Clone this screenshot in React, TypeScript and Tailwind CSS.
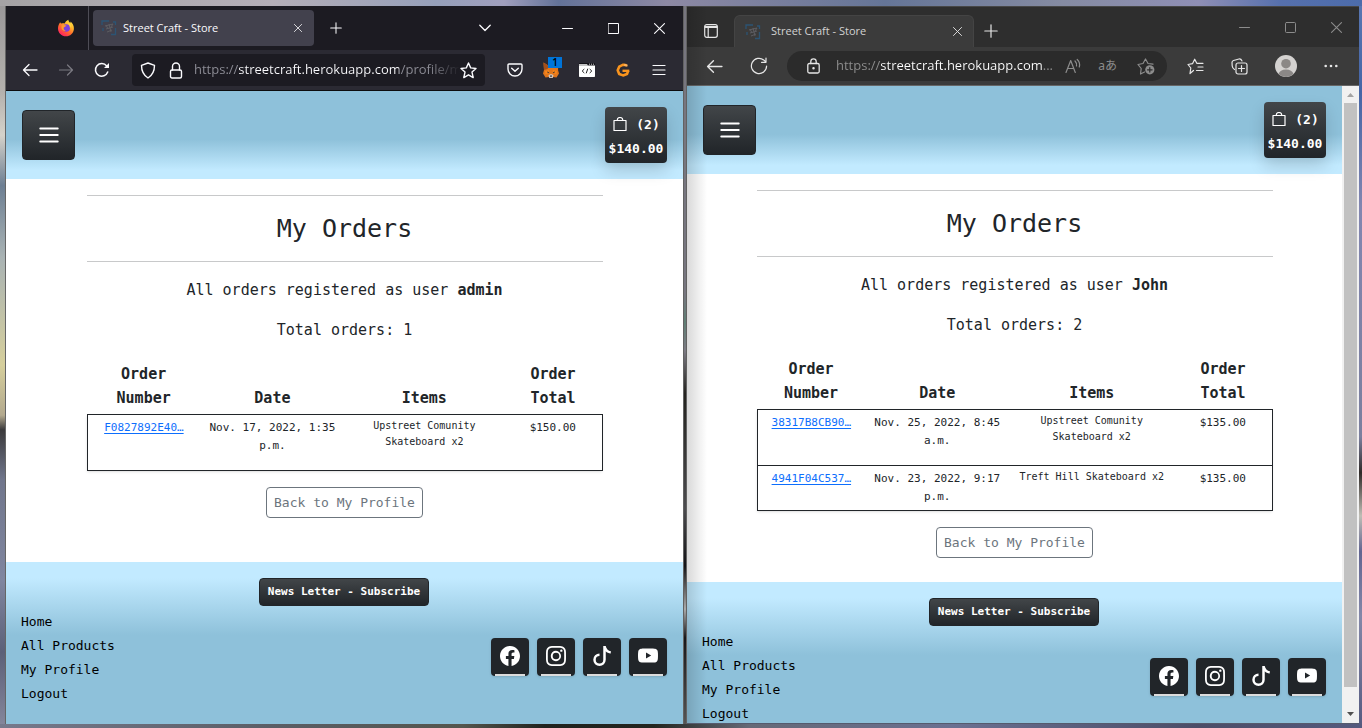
import React from "react";
import { BsFacebook, BsInstagram, BsTiktok, BsYoutube } from "react-icons/bs";

type Order = { number: string; date: string; items: string; total: string };

type StoreProps = {
  user: string;
  orders: Order[];
  columns: string[];
};

const line = {
  fill: "none",
  stroke: "currentColor",
  strokeLinecap: "round" as const,
  strokeLinejoin: "round" as const,
};

function BackIcon({ size }: { size: number }) {
  return (
    <svg width={size} height={size} viewBox="0 0 16 16" {...line} strokeWidth="1.3">
      <path d="M15 8H1.5M7 2.5L1.5 8L7 13.5" />
    </svg>
  );
}

function ForwardIcon() {
  return (
    <svg width="16" height="16" viewBox="0 0 16 16" {...line} strokeWidth="1.2">
      <path d="M1.500 8H14.500M9.500 3L14.500 8L9.500 13" />
    </svg>
  );
}

function CrossIcon({ size }: { size: number }) {
  return (
    <svg width={size} height={size} viewBox="0 0 10 10" {...line} strokeWidth="1">
      <path d="M.5.5L9.500 9.500M9.500.5L.5 9.500" />
    </svg>
  );
}

function PlusIcon({ size }: { size: number }) {
  return (
    <svg width={size} height={size} viewBox="0 0 14 14" {...line} strokeWidth="1.2">
      <path d="M7 .8V13.200M.8 7H13.200" />
    </svg>
  );
}

function MinimizeIcon() {
  return (
    <svg width="11" height="11" viewBox="0 0 11 11" {...line} strokeWidth="1">
      <path d="M.5 5.500H10.500" />
    </svg>
  );
}

function MaximizeIcon({ radius }: { radius: number }) {
  return (
    <svg width="11" height="11" viewBox="0 0 11 11" {...line} strokeWidth="1">
      <rect x=".5" y=".5" width="10" height="10" rx={radius} />
    </svg>
  );
}

function StoreIcon() {
  return (
    <svg width="16" height="16" viewBox="0 0 16 16" fill="none" className="shrink-0">
      <path d="M1 5V1H5M5 1H8M14.500 8V14.500H10M14.500 5V2H12M2 8V11" stroke="#2c5474" strokeWidth="1.300" />
      <path
        d="M4 6L12 4M5 9L12 7M6 12L11 10M8 4L10 12M5 5L7 9M12 4L10 7"
        stroke="#5d5d62"
        strokeWidth="1"
      />
    </svg>
  );
}

function FirefoxIcon() {
  return (
    <svg width="18" height="18" viewBox="0 0 18 18">
      <defs>
        <linearGradient id="flame" x1="1" y1="0" x2="0.3" y2="1">
          <stop offset="0" stopColor="#fff44f" />
          <stop offset="0.35" stopColor="#ffbd2e" />
          <stop offset="0.65" stopColor="#ff6a2a" />
          <stop offset="1" stopColor="#ff1f63" />
        </linearGradient>
      </defs>
      <path
        d="M3.200 3.200C3.400 4 3.900 4.400 4.500 4.600C5.600 4 6.800 4 7.700 4.500C8.400 2.800 9.500 1.500 11.400.8C11.300 2.300 12.400 3.100 13.200 4C13.600 3.600 13.600 3.100 13.500 2.600C15.700 4.400 17.100 7 16.900 10C16.600 14.400 13.100 17.300 9 17.300C4.600 17.300 1 14 1 9.500C1 7.200 1.700 4.900 3.200 3.200Z"
        fill="url(#flame)"
      />
      <circle cx="9.300" cy="9" r="3.700" fill="#7a3fe0" />
      <path d="M4.500 6.500C6.500 5.500 8.500 5.800 9.700 7C8.200 7.100 7.500 8.100 6.700 8.700C6.500 10 7.200 11.300 8.700 11.700C7 12.500 4.800 11 4.500 9Z" fill="#ff9b2f" />
      <path d="M9.500 2.800C11.500 4 13 6 12.900 9C13.900 8 14 6.500 13.700 5.500" fill="#ffd840" />
    </svg>
  );
}

function FoxIcon() {
  return (
    <svg width="18" height="18" viewBox="0 0 18 18">
      <path d="M1.500 1.500L7 5H11L16.500 1.500L16 9L17 12.500L14.500 16.500L10.800 16H7.200L3.500 16.500L1 12.500L2 9Z" fill="#e2761b" />
      <path d="M1.500 1.500L7 5L5.500 8L2 9Z" fill="#a34f1c" />
      <path d="M3 10L7 9L7.500 12L3.500 13.500ZM15 10L11 9L10.500 12L14.500 13.500Z" fill="#f6851b" />
      <path d="M5 10.500L7.300 11.300L6 12.300ZM13 10.500L10.700 11.300L12 12.300Z" fill="#2b2f3a" />
      <path d="M6.500 14L9 13L11.500 14L10.800 17H7.200Z" fill="#d0c3b8" />
      <path d="M8 14.500H10L9.500 16H8.500Z" fill="#2b2f3a" />
    </svg>
  );
}

function CodeIcon() {
  return (
    <svg width="16" height="14" viewBox="0 0 16 14">
      <rect width="16" height="14" rx=".8" fill="#fff" />
      <path d="M0 0H16V2.500H0Z" fill="#15141a" />
      <path d="M0 1.300H8L9 2.500H0Z" fill="#fff" />
      <path d="M10 1.200H11M12 1.200H13M14 1.200H15" stroke="#fff" strokeWidth=".8" />
      <path d="M5.300 6L3.200 8L5.300 10M10.700 6L12.800 8L10.700 10M8.800 5.700L7.200 10.300" fill="none" stroke="#222" strokeWidth="1" />
    </svg>
  );
}

function GIcon() {
  return (
    <svg width="14" height="14" viewBox="0 0 14 14" fill="none">
      <path d="M10.600 2.300L7.300 1.700L3.200 3.700L1.700 7.300L3.200 11L7 12.400L11 11L12.200 7.900" stroke="#f9941e" strokeWidth="2.600" strokeLinejoin="round" />
      <path d="M6.500 7.800H13.300" stroke="#f9941e" strokeWidth="2.400" />
      <path d="M8.200 1.700L11.500 2.800" stroke="#ffb35c" strokeWidth="2" />
    </svg>
  );
}

function BagIcon() {
  return (
    <svg width="16" height="16" viewBox="0 0 16 16" {...line} strokeWidth="1.200">
      <path d="M2 3.500H14V13.500H2ZM5.300 3.500V2.700A2.700 2.200 0 0 1 10.700 2.700V3.500" />
    </svg>
  );
}

function MenuButton() {
  return (
    <button
      aria-label="Menu"
      className="flex h-[50px] w-[53px] items-center justify-center rounded border border-[#212529] bg-linear-to-b from-[#424649] to-[#212529] text-white"
    >
      <svg width="20" height="16" viewBox="0 0 20 16" fill="none" stroke="currentColor" strokeWidth="1.800" strokeLinecap="round">
        <path d="M1.200 1.500H18.800M1.200 8H18.800M1.200 14.500H18.800" />
      </svg>
    </button>
  );
}

const socials = [
  { name: "Facebook", Icon: BsFacebook },
  { name: "Instagram", Icon: BsInstagram },
  { name: "TikTok", Icon: BsTiktok },
  { name: "YouTube", Icon: BsYoutube },
];

function StorePage({ user, orders, columns }: StoreProps) {
  return (
    <div className="flex min-h-full flex-col bg-white font-['DejaVu_Sans_Mono',monospace] text-[15px] leading-6 text-[#212529]">
      <header className="flex h-[88px] shrink-0 items-center justify-between bg-[linear-gradient(#8ec1da_55%,#c2eaff_90%)] px-4">
        <MenuButton />
        <a
          href="#bag"
          className="flex h-14 w-[62px] flex-col items-center justify-center rounded bg-linear-to-b from-[#424649] to-[#212529] pt-1 text-[13px] font-bold text-white shadow-[0_8px_16px_rgba(0,0,0,0.15)]"
        >
          <span className="flex items-center gap-2">
            <BagIcon />
            (2)
          </span>
          <span>$140.00</span>
        </a>
      </header>

      <main className="mx-auto w-full max-w-[540px] grow px-3 pb-6 text-center">
        <hr className="mt-4 border-[#c8c9ca]" />
        <h1 className="my-4 text-[25px] leading-[33px]">My Orders</h1>
        <hr className="border-[#c8c9ca]" />
        <p className="mt-4">
          All orders registered as user <strong>{user}</strong>
        </p>
        <p className="my-4">Total orders: {orders.length}</p>
        <table className="w-full table-fixed border-collapse">
          <colgroup>
            {columns.map((width, i) => (
              <col key={i} className={width} />
            ))}
          </colgroup>
          <thead>
            <tr>
              <th className="px-6 py-1 align-bottom">Order Number</th>
              <th className="p-1 align-bottom">Date</th>
              <th className="p-1 align-bottom">Items</th>
              <th className="px-4 py-1 align-bottom">Order Total</th>
            </tr>
          </thead>
          <tbody className="shadow-sm">
            {orders.map((order) => (
              <tr key={order.number} className="border border-[#212529] align-top text-[11px] leading-[18px]">
                <td className="p-1">
                  <a href="#order" className="text-[#0d6efd] underline underline-offset-2">
                    {order.number}
                  </a>
                </td>
                <td className="p-1">{order.date}</td>
                <td className="px-1 py-[3px] text-[10px] leading-4">
                  <p className="mb-[17px]">{order.items}</p>
                </td>
                <td className="p-1">{order.total}</td>
              </tr>
            ))}
          </tbody>
        </table>
        <a
          href="#profile"
          className="mt-4 inline-block rounded border border-[#6c757d] px-[7px] py-1 text-[13px] leading-[21px] text-[#6c757d]"
        >
          Back to My Profile
        </a>
      </main>

      <footer className="shrink-0 bg-[linear-gradient(#c2eaff_10%,#8ec1da_45%)] pt-4 pr-4 pb-[18px] pl-[15px]">
        <div className="flex justify-center">
          <button className="rounded-sm border border-[#212529] bg-linear-to-b from-[#424649] to-[#212529] px-2 py-1 text-[11px] leading-[18px] font-bold text-white">
            News Letter - Subscribe
          </button>
        </div>
        <div className="mt-1 flex items-center justify-between">
          <ul className="text-[13px] text-black">
            {["Home", "All Products", "My Profile", "Logout"].map((label) => (
              <li key={label}>
                <a href="#page">{label}</a>
              </li>
            ))}
          </ul>
          <div className="flex gap-2 pb-0.5">
            {socials.map(({ name, Icon }) => (
              <a
                key={name}
                href="#social"
                aria-label={name}
                className="flex h-[38px] w-[38px] flex-col items-center justify-between rounded bg-[#212529] pt-2 text-xl text-white shadow-sm"
              >
                <Icon />
                <span className="h-0.5 w-[30px] bg-[#dcdcdc]" />
              </a>
            ))}
          </div>
        </div>
      </footer>
    </div>
  );
}

function FirefoxWindow() {
  return (
    <section className="flex min-h-0 min-w-0 flex-col overflow-hidden font-['Open_Sans',sans-serif] text-[#fbfbfe]">
      <div className="flex h-11 shrink-0 items-center bg-[#1c1b22]">
        <div className="flex w-[83px] items-center justify-end self-stretch border-r border-[#4e4d56] pr-[13px]">
          <FirefoxIcon />
        </div>
        <div className="ml-1 flex h-9 w-[221px] items-center rounded bg-[#42414d] px-2">
          <StoreIcon />
          <span className="ml-1.5 grow text-[11px]">Street Craft - Store</span>
          <button aria-label="Close tab" className="mr-1"><CrossIcon size={8} /></button>
        </div>
        <button aria-label="New tab" className="ml-4"><PlusIcon size={12} /></button>
        <div className="ml-auto flex items-center">
          <button aria-label="List all tabs" className="mr-[71px]">
            <svg width="12" height="8" viewBox="0 0 12 8" {...line} strokeWidth="1.300"><path d="M.8 1.200L6 6.500L11.200 1.200" /></svg>
          </button>
          <button aria-label="Minimize" className="mr-[35px]"><MinimizeIcon /></button>
          <button aria-label="Maximize" className="mr-[35px]"><MaximizeIcon radius={0} /></button>
          <button aria-label="Close" className="mr-[18px]"><CrossIcon size={11} /></button>
        </div>
      </div>
      <div className="flex h-[41px] shrink-0 items-center border-b border-[#0c0c0d] bg-[#2b2a33] pl-4">
        <button aria-label="Back"><BackIcon size={16} /></button>
        <button aria-label="Forward" className="ml-5 text-[#7b7a82]"><ForwardIcon /></button>
        <button aria-label="Reload" className="ml-5">
          <svg width="16" height="16" viewBox="0 0 16 16" {...line} strokeWidth="1.500">
            <path d="M13.700 10A6.300 6.300 0 1 1 12.700 4" />
            <path d="M15 1V6H10Z" fill="currentColor" stroke="none" />
          </svg>
        </button>
        <div className="ml-[22px] flex h-8 min-w-0 grow items-center rounded bg-[#1c1b22] px-2">
          <svg width="16" height="17" viewBox="0 0 16 17" {...line} strokeWidth="1.400" className="shrink-0">
            <path d="M8 1L14.500 3.300C14.500 9 13 13 8 16C3 13 1.500 9 1.500 3.300Z" />
          </svg>
          <svg width="14" height="17" viewBox="0 0 14 17" {...line} strokeWidth="1.400" className="ml-[13px] shrink-0">
            <path d="M3.500 8V4.500A3.500 3.500 0 0 1 10.500 4.500V8" />
            <rect x="1.500" y="8" width="11" height="8" rx="1.500" />
          </svg>
          <input
            aria-label="Address"
            readOnly
            value="https://streetcraft.herokuapp.com/profile/my_orders"
            className="ml-[11px] min-w-0 grow bg-[linear-gradient(to_right,#8f8f98_45px,#fbfbfe_45px,#fbfbfe_205px,#8f8f98_205px,#8f8f98_88%,transparent)] bg-clip-text text-[13px] text-transparent outline-none"
          />
          <svg width="17" height="17" viewBox="0 0 17 17" {...line} strokeWidth="1.400" className="shrink-0">
            <path d="M8.500 1L10.700 5.900L16 6.500L12 10.100L13.200 15.600L8.500 12.800L3.800 15.600L5 10.100L1 6.500L6.300 5.900Z" />
          </svg>
        </div>
        <div className="mr-4 ml-[22px] flex items-center gap-5">
          <button aria-label="Pocket">
            <svg width="16" height="14" viewBox="0 0 16 14" {...line} strokeWidth="1.400">
              <path d="M2 1H14Q15 1 15 2V6A7 7 0 0 1 1 6V2Q1 1 2 1ZM4.700 5.200L8 8.300L11.300 5.200" />
            </svg>
          </button>
          <button aria-label="Wallet" className="relative -mx-px">
            <FoxIcon />
            <span className="absolute -top-1 left-1.5 h-[11px] w-[14px] bg-[#0074d9] text-center text-[10px] leading-[11px] font-semibold text-black">1</span>
          </button>
          <button aria-label="Source"><CodeIcon /></button>
          <button aria-label="Extension" className="flex w-4 justify-center"><GIcon /></button>
          <button aria-label="Application menu" className="flex w-4 justify-center">
            <svg width="14" height="12" viewBox="0 0 14 12" {...line} strokeWidth="1.200"><path d="M1 1.500H13M1 6H13M1 10.500H13" /></svg>
          </button>
        </div>
      </div>
      <div className="min-h-0 grow overflow-hidden">
        <StorePage
          user="admin"
          columns={["w-[22%]", "w-[28%]", "w-[31%]", "w-[19%]"]}
          orders={[
            { number: "F0827892E40…", date: "Nov. 17, 2022, 1:35 p.m.", items: "Upstreet Comunity Skateboard x2", total: "$150.00" },
          ]}
        />
      </div>
    </section>
  );
}

function EdgeWindow() {
  return (
    <section className="relative mb-px flex min-h-0 min-w-0 flex-col overflow-hidden border-t border-[#474747] font-['Open_Sans',sans-serif] text-[#e6e6e6]">
      <div className="flex h-10 shrink-0 items-center bg-[#2e2e2e] pl-[17px]">
        <button aria-label="Tab actions" className="mt-2">
          <svg width="14" height="14" viewBox="0 0 14 14" {...line} strokeWidth="1.200">
            <rect x=".7" y=".7" width="12.600" height="12.600" rx="2" />
            <path d="M1 2.500H13M1 3.500H13M4.200 4V13" />
          </svg>
        </button>
        <div className="ml-4 flex h-8 w-60 items-center self-end rounded-t-md border-x border-t border-[#444] bg-[#3b3b3b] px-2.5">
          <StoreIcon />
          <span className="ml-2.5 grow text-[11px] text-[#d2d2d2]">Street Craft - Store</span>
          <button aria-label="Close tab" className="mr-px"><CrossIcon size={9} /></button>
        </div>
        <button aria-label="New tab" className="mt-2 ml-2.5"><PlusIcon size={14} /></button>
        <div className="ml-auto flex items-center gap-[35px] pr-[17px] text-[#8c8c8c]">
          <button aria-label="Minimize"><MinimizeIcon /></button>
          <button aria-label="Maximize"><MaximizeIcon radius={1} /></button>
          <button aria-label="Close"><CrossIcon size={11} /></button>
        </div>
      </div>
      <div className="flex h-[39px] shrink-0 items-center border-b border-[#666] bg-[#3b3b3b] pl-[19px]">
        <button aria-label="Back"><BackIcon size={17} /></button>
        <button aria-label="Reload" className="ml-[27px]">
          <svg width="18" height="18" viewBox="0 0 18 18" {...line} strokeWidth="1.200">
            <path d="M16.600 9A7.600 7.600 0 1 1 14 3.200L16 5.200M16 1V5.300H11.500" />
          </svg>
        </button>
        <div className="ml-[19px] flex h-[30px] min-w-0 grow items-center rounded-full bg-[#2b2b2b] pr-3 pl-5">
          <svg width="13" height="16" viewBox="0 0 13 16" {...line} strokeWidth="1.300" className="shrink-0">
            <path d="M3.800 5.500V3.500A2.700 2.700 0 0 1 9.200 3.500V5.500" />
            <rect x=".8" y="5.500" width="11.400" height="9.500" rx="1.500" />
            <circle cx="6.500" cy="10.200" r=".6" fill="currentColor" />
          </svg>
          <input
            aria-label="Address"
            readOnly
            value="https://streetcraft.herokuapp.com..."
            className="ml-4 min-w-0 grow bg-[linear-gradient(to_right,#8f8f8f_45px,#ffffff_45px,#ffffff_206px,#8f8f8f_206px)] bg-clip-text text-[13px] text-transparent outline-none"
          />
          <div className="flex items-center gap-4 text-[#8c8c8c]">
            <button aria-label="Read aloud">
              <svg width="17" height="16" viewBox="0 0 17 16" {...line} strokeWidth="1.200">
                <path d="M1 14.500L5.700 2.500L10.300 14.500M2.700 10.500H8.700M10 3Q12 5 11.500 8M12.200 1.500Q15.500 4.500 14.300 9" />
              </svg>
            </button>
            <button className="font-['Noto_Sans','Noto_Sans_CJK_JP',sans-serif] text-xs leading-4">
              aあ
            </button>
            <button aria-label="Add to favorites" className="ml-1">
              <svg width="18" height="18" viewBox="0 0 18 18" {...line} strokeWidth="1.200">
                <path d="M7.500 15L3.500 17L4.200 11.500L1 7.500L6 6.500L8.500 2L11 6.500L16 7.200" />
                <circle cx="12.800" cy="12.800" r="4.600" fill="currentColor" stroke="none" />
                <path d="M10.500 12.800H15.100M12.800 10.500V15.100" stroke="#2b2b2b" />
              </svg>
            </button>
          </div>
        </div>
        <div className="mr-[21px] ml-5 flex items-center gap-[27px]">
          <button aria-label="Favorites">
            <svg width="17" height="17" viewBox="0 0 17 17" {...line} strokeWidth="1.200">
              <path d="M6.500 12.500L3 15.500L3.800 10L1 6.500L5.500 5.700L7.700 1.200L9.800 5.300H16M11 9H16M9.500 12.500H16" />
            </svg>
          </button>
          <button aria-label="Collections">
            <svg width="17" height="17" viewBox="0 0 17 17" {...line} strokeWidth="1.200">
              <path d="M3.500 11.500Q1.500 10.500 1.200 8L1 4.500Q1 3 2.500 2.500L8 1Q10 .7 11 3" />
              <rect x="5" y="5" width="11" height="11" rx="2" />
              <path d="M10.500 7.500V13.500M7.500 10.500H13.500" />
            </svg>
          </button>
          <button aria-label="Profile">
            <svg width="22" height="22" viewBox="0 0 22 22">
              <circle cx="11" cy="11" r="11" fill="#d4d2d0" />
              <circle cx="11" cy="8.700" r="4.800" fill="#8b8886" />
              <path d="M3.500 19Q5 14.500 11 14.500Q17 14.500 18.500 19Q15 22 11 22Q7 22 3.500 19Z" fill="#8b8886" />
            </svg>
          </button>
          <button aria-label="Settings and more">
            <svg width="14" height="4" viewBox="0 0 14 4" fill="currentColor">
              <circle cx="1.700" cy="2" r="1.300" />
              <circle cx="7" cy="2" r="1.300" />
              <circle cx="12.300" cy="2" r="1.300" />
            </svg>
          </button>
        </div>
      </div>
      <div className="flex min-h-0 grow">
        <div className="min-w-0 grow overflow-hidden">
          <StorePage
            user="John"
            columns={["w-[21%]", "w-[28%]", "w-[32%]", "w-[19%]"]}
            orders={[
              { number: "38317B8CB90…", date: "Nov. 25, 2022, 8:45 a.m.", items: "Upstreet Comunity Skateboard x2", total: "$135.00" },
              { number: "4941F04C537…", date: "Nov. 23, 2022, 9:17 p.m.", items: "Treft Hill Skateboard x2", total: "$135.00" },
            ]}
          />
        </div>
        <div className="flex w-[17px] shrink-0 flex-col items-center bg-[#f1f1f1]">
          <svg width="17" height="17" viewBox="0 0 17 17"><path d="M5 11L8.500 7L12 11Z" fill="#a3a3a3" /></svg>
          <div className="mb-[19px] w-[13px] grow bg-[#c1c1c1]" />
          <svg width="17" height="17" viewBox="0 0 17 17"><path d="M5 6L8.500 10L12 6Z" fill="#505050" /></svg>
        </div>
      </div>
      <div className="pointer-events-none absolute inset-y-0 left-0 w-5 bg-linear-to-r from-black/15 to-transparent" />
    </section>
  );
}

export default function App() {
  return (
    <div className="grid h-screen grid-cols-[6px_677fr_4px_672fr_3px] grid-rows-[6px_1fr_4px] overflow-hidden bg-[#555b6e]">
      <div className="col-span-5 bg-[linear-gradient(to_right,#a5a3a5,#b5afb8_20%,#96a0ba_32%,#a09fbd_37%,#637298_41%,#8d89a4_49%,#657597_65%,#858ba2_78%,#8f8fb5_88%,#5670ad_94%,#4c6cab)]" />
      <div className="border-r border-[#666] bg-[linear-gradient(#9a9899,#b4b1ad_12%,#d5d2ca_18%,#6d7f93_25%,#a9b3b4_35%,#d6cf9c_50%,#b3a98e_57%,#3b3a3c_59%,#70768c_66%,#8086a0_80%,#5c6078_90%,#84859a)]" />
      <FirefoxWindow />
      <div className="border-x border-x-[#626262] bg-[linear-gradient(#77767f,#77767f_40%,#5f7e74_44%,#7c7a83_48%,#24231f_54%,#4b4b4e_70%,#131316_78%,#aaa_84%,#17171a_88%,#555)]" />
      <EdgeWindow />
      <div className="bg-[linear-gradient(#5876b1,#4565a6_12%,#8286b0_28%,#7b7f9e_60%,#302b29_65%,#bfbdb5_71%,#626591_76%,#8387a8_85%,#565b81)]" />
      <div className="col-span-5 bg-[linear-gradient(to_right,#77798c,#5b5e66_20%,#54564e_34%,#20221e_40%,#23251f_48%,#666977_55%,#6b7091_70%,#4c4d68_88%,#555a7e)]" />
    </div>
  );
}
